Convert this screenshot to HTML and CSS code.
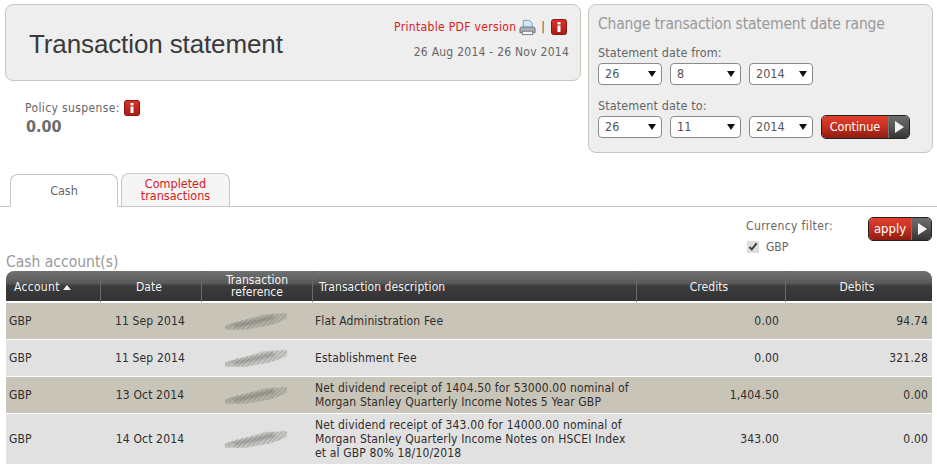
FILE: index.html
```html
<!DOCTYPE html>
<html lang="en">
<head>
<meta charset="utf-8">
<title>Transaction statement</title>
<link rel="stylesheet" href="styles.css">
</head>
<body>
<svg class="defs" width="0" height="0" aria-hidden="true">
  <defs>
    <filter id="soft" x="-10%" y="-30%" width="120%" height="160%"><feGaussianBlur stdDeviation="0.75"/></filter>
    <filter id="softer" x="-10%" y="-50%" width="120%" height="200%"><feGaussianBlur stdDeviation="1.5"/></filter>
    <linearGradient id="redfill" x1="0" y1="0" x2="0" y2="1"><stop offset="0" stop-color="#d8332a"/><stop offset="1" stop-color="#a81c14"/></linearGradient>
    <symbol id="scribble" viewBox="0 0 64 18">
      <path d="M1 13 L14 10 L40 2 L63 1 L63 7 L48 13 L22 18 L1 18 Z" fill="#8a8a84" opacity=".3" filter="url(#soft)"/>
      <g filter="url(#soft)" fill="none">
        <path d="M1 16 L9 11 M4 17 L14 9 M9 17 L19 8 M13 18 L24 7 M18 17 L29 6 M23 17 L34 5 M28 16 L39 4 M33 15 L44 3 M38 15 L49 2 M43 14 L54 2 M48 12 L59 1 M53 11 L63 2" stroke="#7d7d76" stroke-width="1" opacity=".5"/>
      </g>
      <path d="M10 14 C24 11 36 9 50 5" fill="none" stroke="#5f5f58" stroke-width="2.4" opacity=".55" filter="url(#softer)"/>
    </symbol>
    <symbol id="info" viewBox="0 0 16 16">
      <rect x=".5" y=".5" width="15" height="15" rx="2" fill="url(#redfill)" stroke="#8e1610"/>
      <rect x="6.5" y="3" width="3" height="2.4" fill="#fff"/>
      <rect x="6.5" y="6.5" width="3" height="6.5" fill="#fff"/>
    </symbol>
  </defs>
</svg>
<div class="top">
  <div class="top-left">
    <header class="panel title-panel">
      <h1>Transaction statement</h1>
      <div class="title-side">
        <div class="pdf-line">
          <a class="link" href="#">Printable PDF version</a>
          <svg class="printer" width="17" height="17" viewBox="0 0 18 18" aria-hidden="true">
            <path d="M4.5 1.5 H11 L14 4.5 V10 H4.5 Z" fill="#d5e6f6" stroke="#6d9cc9"/>
            <path d="M1 10.5 Q1 8.5 3 8.5 H15 Q17 8.5 17 10.5 V14.5 H1 Z" fill="#a9adb1" stroke="#6d7276"/>
            <rect x="3.5" y="13" width="11" height="3.5" fill="#f2f4f6" stroke="#7b8085"/>
          </svg>
          <span class="pipe">|</span>
          <svg class="info" aria-hidden="true"><use href="#info"/></svg>
        </div>
        <div class="range">26 Aug 2014 - 26 Nov 2014</div>
      </div>
    </header>
    <div class="policy">
      <div class="policy-label">Policy suspense: <svg class="info" aria-hidden="true"><use href="#info"/></svg></div>
      <div class="policy-value">0.00</div>
    </div>
  </div>
  <form class="panel range-panel">
    <h2>Change transaction statement date range</h2>
    <label class="field-label">Statement date from:</label>
    <div class="select-row">
      <span class="sel sel-day"><select><option>26</option></select></span>
      <span class="sel sel-month"><select><option>8</option></select></span>
      <span class="sel sel-year"><select><option>2014</option></select></span>
    </div>
    <label class="field-label second">Statement date to:</label>
    <div class="select-row">
      <span class="sel sel-day"><select><option>26</option></select></span>
      <span class="sel sel-month"><select><option>11</option></select></span>
      <span class="sel sel-year"><select><option>2014</option></select></span>
      <button class="btn btn-continue" type="button"><span class="btn-text">Continue</span><span class="btn-arrow"></span></button>
    </div>
  </form>
</div>

<nav class="tabs">
  <a class="tab tab-active" href="#">Cash</a>
  <a class="tab tab-other" href="#">Completed transactions</a>
</nav>

<div class="filter-row">
  <div class="filter">
    <div class="filter-label">Currency filter:</div>
    <label class="filter-check"><input type="checkbox" checked> GBP</label>
  </div>
  <button class="btn btn-apply" type="button"><span class="btn-text">apply</span><span class="btn-arrow"></span></button>
</div>

<h3 class="section">Cash account(s)</h3>
<table class="grid">
  <colgroup>
    <col class="c1"><col class="c2"><col class="c3"><col class="c4"><col class="c5"><col class="c6">
  </colgroup>
  <thead>
    <tr>
      <th class="left acct">Account <span class="sort"></span></th>
      <th class="shift">Date</th>
      <th class="ref">Transaction reference</th>
      <th class="left">Transaction description</th>
      <th class="shift">Credits</th>
      <th class="shift">Debits</th>
    </tr>
  </thead>
  <tbody>
    <tr class="odd">
      <td>GBP</td><td class="mid">11 Sep 2014</td>
      <td class="mid"><svg class="scribble" aria-hidden="true"><use href="#scribble"/></svg></td>
      <td class="desc">Flat Administration Fee</td><td class="num credit">0.00</td><td class="num">94.74</td>
    </tr>
    <tr class="even">
      <td>GBP</td><td class="mid">11 Sep 2014</td>
      <td class="mid"><svg class="scribble" aria-hidden="true"><use href="#scribble"/></svg></td>
      <td class="desc">Establishment Fee</td><td class="num credit">0.00</td><td class="num">321.28</td>
    </tr>
    <tr class="odd">
      <td>GBP</td><td class="mid">13 Oct 2014</td>
      <td class="mid"><svg class="scribble" aria-hidden="true"><use href="#scribble"/></svg></td>
      <td class="desc">Net dividend receipt of 1404.50 for 53000.00 nominal of<br>Morgan Stanley Quarterly Income Notes 5 Year GBP</td><td class="num credit">1,404.50</td><td class="num">0.00</td>
    </tr>
    <tr class="even">
      <td>GBP</td><td class="mid">14 Oct 2014</td>
      <td class="mid"><svg class="scribble" aria-hidden="true"><use href="#scribble"/></svg></td>
      <td class="desc">Net dividend receipt of 343.00 for 14000.00 nominal of<br>Morgan Stanley Quarterly Income Notes on HSCEI Index<br>et al GBP 80% 18/10/2018</td><td class="num credit">343.00</td><td class="num">0.00</td>
    </tr>
  </tbody>
</table>
</body>
</html>
```
FILE: styles.css
```css
* { box-sizing: border-box; }
html, body { margin: 0; padding: 0; }
body {
  width: 937px;
  height: 470px;
  overflow: hidden;
  background: #fff;
  color: #555;
  font-family: "DejaVu Sans", sans-serif;
  font-stretch: condensed;
  font-size: 12px;
  line-height: 14px;
}
.defs { position: absolute; }
.top { display: flex; gap: 7px; padding: 4px 4px 0 5px; height: 174px; }
.top-left { width: 576px; flex: none; }
.panel { background: #eee; border: 1px solid #c8c6bd; border-radius: 8px; }
.title-panel { height: 77px; display: flex; justify-content: space-between; position: relative; }
h1 {
  margin: 0;
  padding: 24px 0 0 23px;
  font: 400 26px/30px "Liberation Sans", sans-serif;
  letter-spacing: -.12px;
  color: #3a3a3a;
}
.title-side { display: flex; flex-direction: column; align-items: flex-end; padding: 13px 11px 0 0; }
.pdf-line { display: flex; align-items: center; height: 18px; margin-right: 2px; }
.link { color: #d8201a; text-decoration: none; letter-spacing: .33px; }
.printer { margin: 0 5px 0 3px; }
.pipe { color: #555; margin-right: 6px; }
.info { width: 16px; height: 16px; display: inline-block; vertical-align: middle; flex: none; }
.range { margin-top: 9px; color: #666; letter-spacing: .25px; }
.policy { padding: 18px 0 0 20px; }
.policy-label { height: 18px; display: flex; align-items: center; gap: 4px; color: #666; letter-spacing: .37px; }
.policy-value { font: 700 16px/20px "DejaVu Sans", sans-serif; font-stretch: condensed; color: #6c6c6c; margin: 0 0 0 1px; }
.range-panel { width: 345px; height: 149px; padding: 10px 9px 0; }
h2 { margin: 0; font-weight: 400; font-size: 15.5px; line-height: 18px; letter-spacing: -.18px; color: #999; }
.field-label { display: block; margin-top: 12px; line-height: 16px; color: #666; font-size: 12.5px; letter-spacing: .1px; }
.field-label.second { margin-top: 12px; }
.select-row { display: flex; gap: 8px; align-items: center; margin-top: 1px; height: 24px; }
.sel { position: relative; display: block; height: 22px; }
.sel::after {
  content: "";
  position: absolute;
  right: 6px;
  top: 8px;
  border: 4px solid transparent;
  border-top: 6px solid #111;
  border-bottom: 0;
  pointer-events: none;
}
.sel select {
  appearance: none;
  width: 100%;
  height: 100%;
  background: #fff;
  border: 1px solid #8a8a8a;
  border-radius: 4px;
  padding: 0 6px;
  color: #555;
  font: inherit;
  font-stretch: condensed;
  font-size: 12.5px;
}
.sel-day { width: 64px; }
.sel-month { width: 71px; }
.sel-year { width: 64px; }
.btn {
  display: inline-flex;
  padding: 0;
  border: 1px solid #222;
  border-radius: 5px;
  overflow: hidden;
  background: none;
  color: #fff;
  font: inherit;
  font-stretch: condensed;
}
.btn-text {
  display: flex;
  align-items: center;
  justify-content: center;
  background: linear-gradient(#e0402c, #c5301f 50%, #8e1c12);
}
.btn-arrow {
  position: relative;
  background: linear-gradient(#6c6c6c, #555 50%, #333);
  border-left: 1px solid #777;
  flex: none;
}
.btn-arrow::after {
  content: "";
  position: absolute;
  left: 6px;
  top: 50%;
  margin-top: -6px;
  border: 6px solid transparent;
  border-left: 9px solid #f2f2f2;
  border-right: 0;
}
.btn-continue { width: 89px; height: 24px; margin: -1px 0 0 0; font-size: 12.5px; }
.btn-continue .btn-text { width: 66px; }
.btn-continue .btn-arrow { width: 21px; }
.btn-apply { width: 64px; height: 24px; font-size: 13px; }
.btn-apply .btn-text { width: 42px; }
.btn-apply .btn-arrow { width: 20px; }
.tabs { display: flex; gap: 3px; height: 33px; padding-left: 10px; border-bottom: 1px solid #c8c6bd; align-items: flex-end; }
.tab {
  display: flex;
  align-items: center;
  justify-content: center;
  text-align: center;
  text-decoration: none;
  border: 1px solid #c8c6bd;
  border-radius: 8px 8px 0 0;
}
.tab-active { width: 108px; height: 33px; background: #fff; border-bottom: 1px solid #fff; margin-bottom: -1px; color: #666; font-size: 12.5px; }
.tab-other { width: 109px; height: 33px; background: #f5f5f5; border-bottom: 0; color: #d8201a; line-height: 12px; padding: 0 10px; font-size: 12.5px; }
.filter-row { display: flex; justify-content: flex-end; align-items: flex-start; padding: 10px 5px 0 0; gap: 36px; height: 43px; }
.filter { padding-top: 2px; width: 86px; }
.filter-label { color: #666; letter-spacing: .4px; line-height: 14px; white-space: nowrap; }
.filter-check { display: flex; align-items: center; gap: 7px; margin: 7px 0 0 1px; color: #666; height: 14px; }
.filter-check input { margin: 0; width: 12px; height: 12px; accent-color: #ddd; }
.section { margin: 3px 0 0 6px; font-weight: 400; font-size: 15.5px; line-height: 18px; color: #999; }
.grid { width: 926px; margin: 0 0 0 6px; border-collapse: separate; border-spacing: 0; table-layout: fixed; color: #2e2e2e; letter-spacing: .15px; }
.c1 { width: 95px; } .c2 { width: 101px; } .c3 { width: 111px; } .c4 { width: 324px; } .c5 { width: 149px; } .c6 { width: 146px; }
.grid th {
  height: 32px;
  padding: 2px 3px 0;
  font-weight: 400;
  color: #f2f2f2;
  line-height: 12px;
  letter-spacing: .05px;
  background: linear-gradient(#707070, #5a5a5a 40%, #3c3c3c 50%, #333);
  border-right: 1px solid #6a6a6a;
  border-bottom: 2px solid #fff;
}
.grid th:first-child { border-top-left-radius: 8px; }
.grid th:last-child { border-top-right-radius: 8px; border-right: 0; }
.grid th.left { text-align: left; padding-left: 6px; }
.grid th.acct { padding-left: 8px; letter-spacing: .3px; }
.grid th.shift { padding-right: 7px; }
.grid th.ref { padding: 0 16px; }
.sort {
  display: inline-block;
  margin: 0 0 1px 0;
  border: 4px solid transparent;
  border-bottom: 5px solid #f2f2f2;
  border-top: 0;
}
.grid td { padding: 0 3px; border-bottom: 1px solid #fff; height: 37px; line-height: 14px; }
.grid tbody tr:last-child td { height: 50px; border-bottom: 0; }
.odd td { background: #c8c4b8; }
.even td { background: #e1e1e1; }
.grid td.mid { text-align: center; padding-right: 6px; }
.grid td.desc { padding-left: 2px; }
.grid td.num { text-align: right; padding-right: 4px; }
.grid td.credit { padding-right: 7px; }
.scribble { display: block; width: 64px; height: 18px; margin: 0 auto; }
```
